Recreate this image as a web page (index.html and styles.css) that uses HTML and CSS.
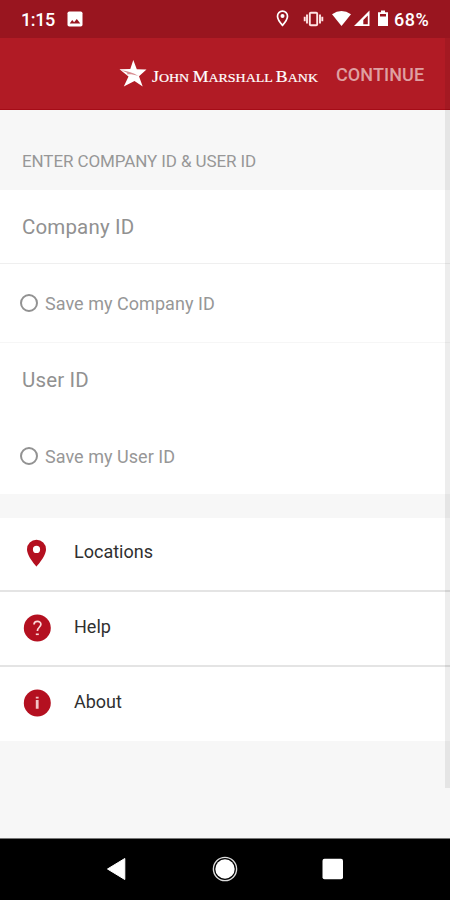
FILE: index.html
```html
<!DOCTYPE html>
<html lang="en">
<head>
<meta charset="utf-8">
<title>John Marshall Bank</title>
<link rel="stylesheet" href="styles.css">
</head>
<body>
<div class="phone">
  <header class="status">
    <span class="clock">1:15</span>
    <svg class="photo" width="16" height="16" viewBox="0 0 16 16"><rect x=".5" y=".5" width="15" height="15" rx="1.8" fill="#fff"/><path d="M2.700 12.500 5.200 9l1.900 2.200L9.800 8l3.500 4.500z" fill="#99151f"/></svg>
    <svg class="indicators" width="116" height="20" viewBox="0 0 116 20">
      <path d="M7.500 2.200a5 5 0 0 0-5 5.100c0 3.600 5 9 5 9s5-5.400 5-9a5 5 0 0 0-5-5.100z" fill="none" stroke="#fff" stroke-width="1.700"/><circle cx="7.500" cy="7" r="2" fill="#fff"/>
      <g fill="none" stroke="#ffe3e3" stroke-width="1.900"><rect x="34.800" y="3.800" width="7.400" height="12.400" rx="1"/><path d="M32 5.500v9M45 5.500v9M29.700 7.800v4.400M47.300 7.800v4.400"/></g>
      <path d="M57 5.200Q66.500-1.200 76 5.200L66.500 17z" fill="#fff"/>
      <path d="M94.500 1.500V17H79z" fill="#fff"/><path d="M92.800 6.500v8.800h-4.500V11z" fill="#99151f"/>
      <path d="M106 1.500h4v1.800h3V17h-10V3.300h3z" fill="#fff"/><path d="M105 5h6v2.500h-6z" fill="#99151f"/>
    </svg>
    <span class="percent">68%</span>
  </header>
  <div class="toolbar">
    <svg class="logo" width="204" height="34" viewBox="0 0 204 34">
      <path d="M17.300 3 20.800 12.200 30.500 12.400 23 19.300 26.700 29.500 18.500 24 7.800 29.500 12.500 19.500 3.500 12.200 14.300 12z" fill="#fff"/>
      <path d="M5 13.200c7 .8 12 2.300 17.500 5.800-5-1.700-9-2.300-12.500-1.500 3-1 1-2.300-5-4.300z" fill="#b11b25" opacity=".5"/>
      <text class="wordmark" x="36" y="24.500" textLength="166" lengthAdjust="spacingAndGlyphs"><tspan class="cap">J</tspan>OHN <tspan class="cap">M</tspan>ARSHALL <tspan class="cap">B</tspan>ANK</text>
    </svg>
    <span class="continue">CONTINUE</span>
  </div>
  <main class="content">
    <h1 class="heading">ENTER COMPANY ID &amp; USER ID</h1>
    <section class="form">
      <div class="field company"><span>Company ID</span></div>
      <div class="save first"><i class="radio"></i><span class="save-company">Save my Company ID</span></div>
      <div class="field user"><span>User ID</span></div>
      <div class="save"><i class="radio"></i><span class="save-user">Save my User ID</span></div>
    </section>
    <nav class="menu">
      <div class="item">
        <svg width="28" height="28" viewBox="0 0 28 28"><path fill-rule="evenodd" d="M13.500 .8a9.500 9.500 0 0 0-9.500 9.500C4 17.500 13.500 27.600 13.500 27.600s9.500-10.100 9.500-17.300A9.500 9.500 0 0 0 13.500 .8zm0 6a3.600 3.600 0 1 1 0 7.200 3.600 3.600 0 0 1 0-7.200z" fill="#b41020"/></svg>
        <span>Locations</span>
      </div>
      <div class="item">
        <svg width="28" height="28" viewBox="0 0 28 28"><circle cx="14.300" cy="14" r="13.500" fill="#b41020"/><path d="M11 10.600c.1-4.200 6.900-4.200 6.900-.3 0 3-3.500 3-3.500 6.700" fill="none" stroke="#fbd9d9" stroke-width="1.700"/><path d="M12.800 20.300h3" stroke="#fbd9d9" stroke-width="1.600"/></svg>
        <span>Help</span>
      </div>
      <div class="item">
        <svg width="28" height="28" viewBox="0 0 28 28"><circle cx="14.300" cy="14" r="13.500" fill="#b41020"/><path d="M14.200 11v8.800M14.200 7.700v1.900" fill="none" stroke="#f3c4c6" stroke-width="2.800"/></svg>
        <span>About</span>
      </div>
    </nav>
  </main>
  <footer class="navbar">
    <svg width="20" height="24" viewBox="0 0 20 24"><path d="M18.800 1.500v21L1.500 12z" fill="#fff" stroke="#fff" stroke-linejoin="round"/></svg>
    <svg width="26" height="26" viewBox="0 0 26 26"><circle cx="13" cy="13" r="11.600" fill="none" stroke="#ddd" stroke-width="1.400"/><circle cx="13" cy="13" r="9.700" fill="#fff"/></svg>
    <svg width="22" height="22" viewBox="0 0 22 22"><rect x=".5" y=".7" width="20.500" height="20.500" rx="2" fill="#fff"/></svg>
  </footer>
  <div class="scrollbar"></div>
</div>
</body>
</html>
```
FILE: styles.css
```css
* { box-sizing: border-box; }
body { margin: 0; font-family: Roboto, sans-serif; }
.phone { position: relative; width: 450px; height: 900px; display: flex; flex-direction: column; overflow: hidden; background: #f7f7f7; }
.status { height: 38px; flex: none; display: flex; align-items: center; padding: 0 19px 0 21px; background: #99151f; color: #fff; font-size: 18px; font-weight: 500; }
.clock { width: 46px; padding-top: 1px; letter-spacing: -.4px; }
.indicators { margin-left: auto; margin-right: 3px; }
.percent { width: 37px; padding-top: 1px; white-space: nowrap; letter-spacing: .5px; }
.toolbar { height: 72px; flex: none; display: flex; align-items: center; padding-left: 116px; background: #b11b25; border-bottom: 1px solid #a50c17; }
.logo { flex: none; }
.wordmark { font-family: "Liberation Serif", serif; font-size: 13px; font-weight: 400; fill: #fff; stroke: #fff; stroke-width: .2px; }
.cap { font-size: 16.5px; }
.continue { margin-left: 16px; padding-top: 1px; font-size: 18px; font-weight: 500; letter-spacing: .1px; color: #dfa0a2; }
.content { flex: 1; }
.heading { margin: 0; height: 80px; padding: 40px 22px 0; font-size: 17px; line-height: 22px; font-weight: 400; letter-spacing: -.1px; color: #979797; }
.form { height: 304px; background: #fff; }
.field { display: flex; align-items: center; padding-left: 22px; font-size: 20.5px; letter-spacing: .15px; color: #919191; }
.company { height: 74px; border-bottom: 1px solid #efefef; }
.user { height: 75px; padding-bottom: 1px; }
.save { height: 76px; display: flex; align-items: center; padding-left: 20px; font-size: 18px; letter-spacing: .04px; color: #979797; }
.save.first { height: 79px; border-bottom: 1px solid #f6f6f6; }
.radio { width: 18px; height: 18px; margin-right: 7px; border: 2px solid #929292; border-radius: 50%; }
.menu { margin-top: 24px; background: #fff; }
.item { height: 75px; display: flex; align-items: center; padding: 1px 0 0 23px; gap: 23px; font-size: 18px; color: #303030; border-bottom: 2px solid #e4e4e4; }
.item svg { margin-top: -3px; }
.item span { margin-top: -6px; }
.item:first-child { height: 74px; padding-top: 0; }
.item:last-child { height: 74px; border: 0; padding-top: 0; }
.navbar { height: 62px; flex: none; display: flex; align-items: center; background: #000; padding: 0 0 2px 106px; border-top: 1px solid #777; }
.navbar svg:nth-child(2) { margin-left: 86px; }
.navbar svg:nth-child(3) { margin-left: 84px; }
.scrollbar { position: absolute; left: 445px; top: 38px; width: 5px; height: 750px; background: rgba(0, 0, 0, .07); }
```
